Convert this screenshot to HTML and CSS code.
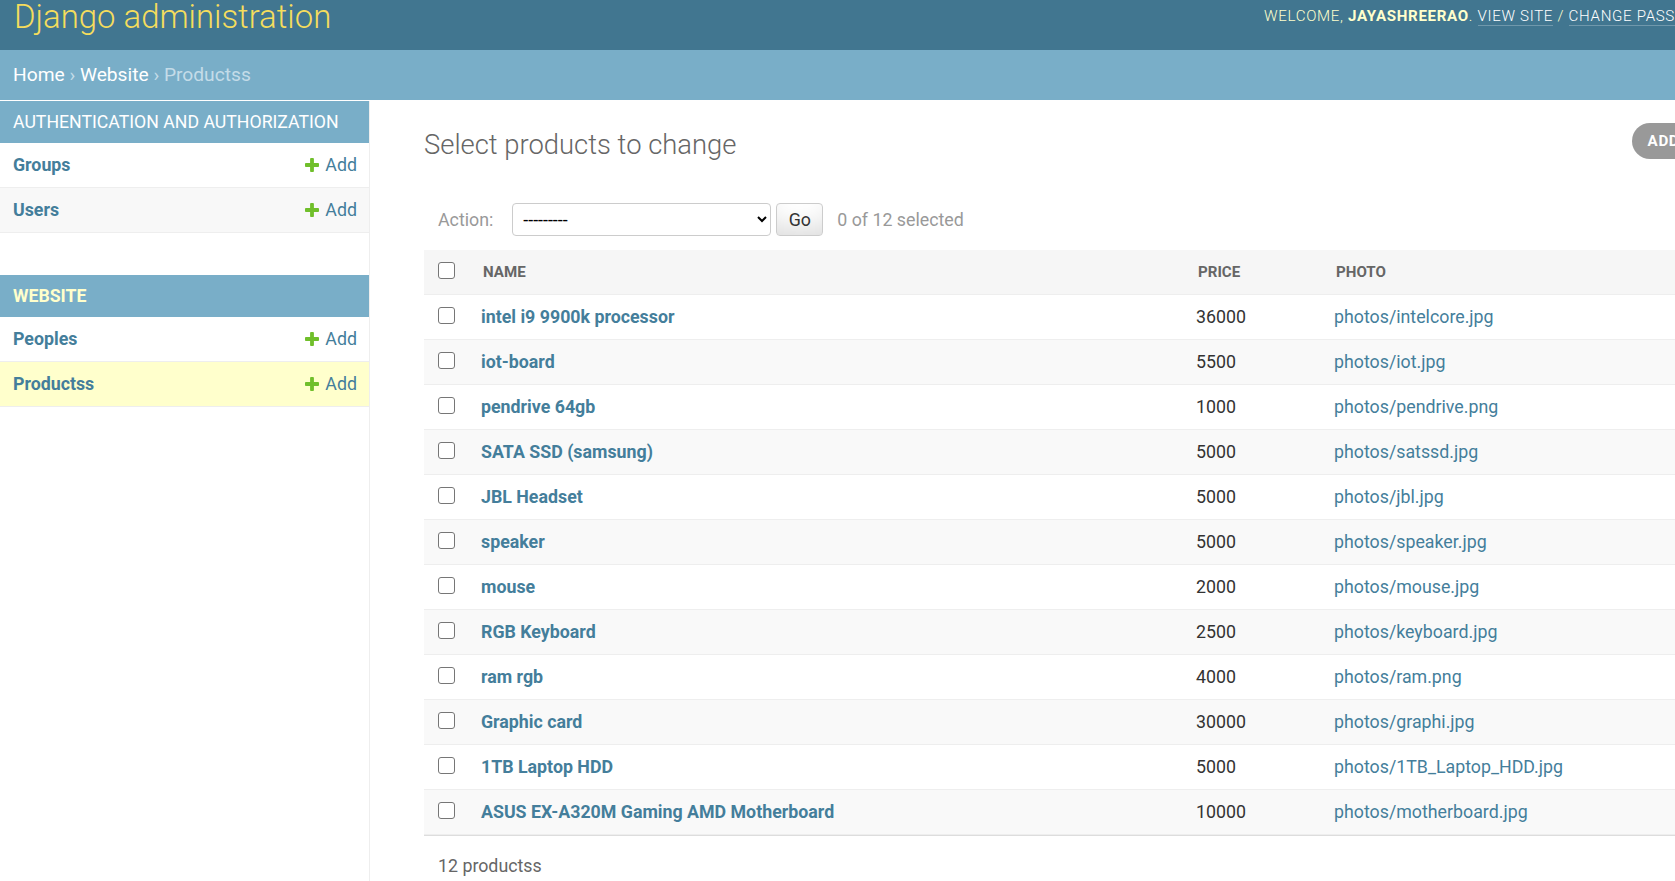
FILE: index.html
```html
<!DOCTYPE html>
<html lang="en">
<head>
<meta charset="utf-8">
<title>Select products to change | Django site admin</title>
<link rel="stylesheet" href="styles.css">
</head>
<body>
<div class="page">
  <header class="header">
    <h1 class="branding">Django administration</h1>
    <div class="user-tools">Welcome, <strong>jayashreerao</strong>. <a href="#">View site</a> / <a href="#">Change password</a> / <a href="#">Log out</a></div>
  </header>
  <nav class="breadcrumbs"><a href="#">Home</a> › <a href="#">Website</a> › Productss</nav>
  <div class="main">
    <aside class="sidebar">
      <div class="module">
        <div class="caption">Authentication and Authorization</div>
        <div class="model-row"><a class="model-name" href="#">Groups</a><a class="addlink" href="#"><svg class="plus" viewBox="192 188 1408 1408"><path d="M1600 796v192q0 40-28 68t-68 28h-416v416q0 40-28 68t-68 28h-192q-40 0-68-28t-28-68v-416h-416q-40 0-68-28t-28-68v-192q0-40 28-68t68-28h416v-416q0-40 28-68t68-28h192q40 0 68 28t28 68v416h416q40 0 68 28t28 68z"/></svg>Add</a></div>
        <div class="model-row alt"><a class="model-name" href="#">Users</a><a class="addlink" href="#"><svg class="plus" viewBox="192 188 1408 1408"><path d="M1600 796v192q0 40-28 68t-68 28h-416v416q0 40-28 68t-68 28h-192q-40 0-68-28t-28-68v-416h-416q-40 0-68-28t-28-68v-192q0-40 28-68t68-28h416v-416q0-40 28-68t68-28h192q40 0 68 28t28 68v416h416q40 0 68 28t28 68z"/></svg>Add</a></div>
      </div>
      <div class="module current-app">
        <div class="caption">Website</div>
        <div class="model-row"><a class="model-name" href="#">Peoples</a><a class="addlink" href="#"><svg class="plus" viewBox="192 188 1408 1408"><path d="M1600 796v192q0 40-28 68t-68 28h-416v416q0 40-28 68t-68 28h-192q-40 0-68-28t-28-68v-416h-416q-40 0-68-28t-28-68v-192q0-40 28-68t68-28h416v-416q0-40 28-68t68-28h192q40 0 68 28t28 68v416h416q40 0 68 28t28 68z"/></svg>Add</a></div>
        <div class="model-row current"><a class="model-name" href="#">Productss</a><a class="addlink" href="#"><svg class="plus" viewBox="192 188 1408 1408"><path d="M1600 796v192q0 40-28 68t-68 28h-416v416q0 40-28 68t-68 28h-192q-40 0-68-28t-28-68v-416h-416q-40 0-68-28t-28-68v-192q0-40 28-68t68-28h416v-416q0-40 28-68t68-28h192q40 0 68 28t28 68v416h416q40 0 68 28t28 68z"/></svg>Add</a></div>
      </div>
    </aside>
    <section class="content">
      <div class="title-row">
        <h1 class="title">Select products to change</h1>
        <a class="object-tool" href="#">Add products <svg class="tool-plus" viewBox="192 188 1408 1408"><path d="M1600 796v192q0 40-28 68t-68 28h-416v416q0 40-28 68t-68 28h-192q-40 0-68-28t-28-68v-416h-416q-40 0-68-28t-28-68v-192q0-40 28-68t68-28h416v-416q0-40 28-68t68-28h192q40 0 68 28t28 68v416h416q40 0 68 28t28 68z"/></svg></a>
      </div>
      <div class="actions">
        <label class="action-label">Action:</label>
        <select class="action-select"><option>---------</option><option>Delete selected productss</option></select>
        <button class="go" type="button">Go</button>
        <span class="counter">0 of 12 selected</span>
      </div>
      <table class="results">
        <colgroup><col class="c-cb"><col class="c-name"><col class="c-price"><col></colgroup>
        <thead>
          <tr><th class="cb-cell"><input class="cb" type="checkbox"></th><th><span class="text">Name</span></th><th><span class="text">Price</span></th><th><span class="text">Photo</span></th></tr>
        </thead>
        <tbody>
          <tr><td class="cb-cell"><input class="cb" type="checkbox"></td><th class="name"><a href="#">intel i9 9900k processor</a></th><td>36000</td><td><a href="#">photos/intelcore.jpg</a></td></tr>
          <tr><td class="cb-cell"><input class="cb" type="checkbox"></td><th class="name"><a href="#">iot-board</a></th><td>5500</td><td><a href="#">photos/iot.jpg</a></td></tr>
          <tr><td class="cb-cell"><input class="cb" type="checkbox"></td><th class="name"><a href="#">pendrive 64gb</a></th><td>1000</td><td><a href="#">photos/pendrive.png</a></td></tr>
          <tr><td class="cb-cell"><input class="cb" type="checkbox"></td><th class="name"><a href="#">SATA SSD (samsung)</a></th><td>5000</td><td><a href="#">photos/satssd.jpg</a></td></tr>
          <tr><td class="cb-cell"><input class="cb" type="checkbox"></td><th class="name"><a href="#">JBL Headset</a></th><td>5000</td><td><a href="#">photos/jbl.jpg</a></td></tr>
          <tr><td class="cb-cell"><input class="cb" type="checkbox"></td><th class="name"><a href="#">speaker</a></th><td>5000</td><td><a href="#">photos/speaker.jpg</a></td></tr>
          <tr><td class="cb-cell"><input class="cb" type="checkbox"></td><th class="name"><a href="#">mouse</a></th><td>2000</td><td><a href="#">photos/mouse.jpg</a></td></tr>
          <tr><td class="cb-cell"><input class="cb" type="checkbox"></td><th class="name"><a href="#">RGB Keyboard</a></th><td>2500</td><td><a href="#">photos/keyboard.jpg</a></td></tr>
          <tr><td class="cb-cell"><input class="cb" type="checkbox"></td><th class="name"><a href="#">ram rgb</a></th><td>4000</td><td><a href="#">photos/ram.png</a></td></tr>
          <tr><td class="cb-cell"><input class="cb" type="checkbox"></td><th class="name"><a href="#">Graphic card</a></th><td>30000</td><td><a href="#">photos/graphi.jpg</a></td></tr>
          <tr><td class="cb-cell"><input class="cb" type="checkbox"></td><th class="name"><a href="#">1TB Laptop HDD</a></th><td>5000</td><td><a href="#">photos/1TB_Laptop_HDD.jpg</a></td></tr>
          <tr><td class="cb-cell"><input class="cb" type="checkbox"></td><th class="name"><a href="#">ASUS EX-A320M Gaming AMD Motherboard</a></th><td>10000</td><td><a href="#">photos/motherboard.jpg</a></td></tr>
        </tbody>
      </table>
      <p class="paginator">12 productss</p>
    </section>
  </div>
</div>
</body>
</html>
```
FILE: styles.css
```css
html, body {
  margin: 0;
  padding: 0;
  overflow: hidden;
}
body {
  font-family: Roboto, "Liberation Sans", Arial, sans-serif;
  font-size: 17.8px;
  color: #333;
  background: #fff;
}
a {
  color: #447e9b;
  text-decoration: none;
}
.page {
  width: 1856px;
  min-height: 881px;
  display: flex;
  flex-direction: column;
}

/* header */
.header {
  display: flex;
  align-items: flex-start;
  height: 50px;
  box-sizing: border-box;
  padding: 0 54px 0 14px;
  background: #417690;
  color: #ffc;
}
.branding {
  margin: 0;
  font-size: 32.9px;
  line-height: 34px;
  font-weight: 300;
  color: #f5dd5d;
}
.user-tools {
  margin-left: auto;
  padding-top: 7px;
  font-size: 15.1px;
  line-height: 18px;
  letter-spacing: 0.68px;
  font-weight: 300;
  text-transform: uppercase;
  white-space: nowrap;
}
.user-tools strong {
  font-weight: 700;
}
.user-tools a {
  color: #fff;
  border-bottom: 1px solid rgba(255, 255, 255, 0.25);
}

/* breadcrumbs */
.breadcrumbs {
  background: #79aec8;
  color: #c4dce8;
  padding: 13px 13px 14px 13px;
  font-size: 19.2px;
  line-height: 23px;
}
.breadcrumbs a {
  color: #fff;
}

/* main */
.main {
  flex: 1;
  display: flex;
  padding-top: 1px;
}
.sidebar {
  width: 369px;
  flex: none;
  border-right: 1px solid #eee;
}
.module {
  margin-bottom: 42px;
}
.caption {
  background: #79aec8;
  color: #fff;
  font-size: 17.7px;
  line-height: 21px;
  padding: 11px 13px 10px;
  text-transform: uppercase;
}
.current-app .caption {
  color: #ffc;
  font-weight: 700;
}
.model-row {
  display: flex;
  align-items: center;
  padding: 11px 12px 11px 13px;
  line-height: 22px;
  border-bottom: 1px solid #eee;
  font-size: 17.8px;
}
.model-row.alt {
  background: #f8f8f8;
}
.model-row.current {
  background: #ffc;
}
.model-name {
  flex: 1;
  font-weight: 700;
}
.addlink {
  display: inline-flex;
  align-items: center;
  gap: 6px;
}
.plus {
  width: 14px;
  height: 14px;
  fill: #70bf2b;
}

/* content */
.content {
  flex: 1;
  min-width: 0;
  padding: 0 54px 0 54px;
}
.title-row {
  display: flex;
  justify-content: space-between;
  align-items: flex-start;
  padding-top: 22px;
}
.title {
  margin: 5px 0 0;
  font-size: 27.4px;
  line-height: 34px;
  font-weight: 300;
  color: #666;
}
.object-tool {
  display: inline-flex;
  align-items: center;
  gap: 9px;
  height: 36px;
  box-sizing: border-box;
  padding: 0 13px 0 16px;
  border-radius: 18px;
  background: #999;
  color: #fff;
  font-size: 15.1px;
  font-weight: 700;
  letter-spacing: 0.68px;
  text-transform: uppercase;
}
.tool-plus {
  width: 13px;
  height: 13px;
  fill: #fff;
}

.actions {
  display: flex;
  align-items: center;
  margin-top: 31px;
  padding: 10px 14px 14px;
  color: #999;
  font-size: 17.8px;
}
.action-label {
  margin-right: 19px;
}
.action-select {
  width: 259px;
  height: 33px;
  box-sizing: border-box;
  padding: 0 6px;
  border: 1px solid #ccc;
  border-radius: 4px;
  background: #fff;
  color: #000;
  font-family: Roboto, "Liberation Sans", Arial, sans-serif;
  font-size: 17.8px;
}
.go {
  width: 47px;
  height: 33px;
  margin-left: 5px;
  box-sizing: border-box;
  border: 1px solid #ccc;
  border-radius: 4px;
  background: #fff;
  box-shadow: 0 -21px 28px -14px rgba(0, 0, 0, 0.15) inset;
  color: #333;
  font-family: Roboto, "Liberation Sans", Arial, sans-serif;
  font-size: 17.8px;
  padding: 0;
}
.counter {
  margin-left: 14px;
}

.results {
  width: 100%;
  border-collapse: collapse;
  table-layout: fixed;
}
.c-cb { width: 46px; }
.c-name { width: 715px; }
.c-price { width: 138px; }
.results thead th {
  background: #f6f6f6;
  padding: 0;
  text-align: left;
  font-size: 15.1px;
  font-weight: 700;
  color: #666;
  text-transform: uppercase;
  border-bottom: 1px solid #eee;
  vertical-align: top;
}
.results thead th .text {
  display: block;
  padding: 11px 13px;
  line-height: 22px;
}
.results tbody td,
.results tbody th {
  padding: 11px;
  line-height: 22px;
  font-size: 17.8px;
  text-align: left;
  border-bottom: 1px solid #eee;
  vertical-align: top;
  white-space: nowrap;
}
.results tbody th.name {
  font-weight: 700;
}
.results tbody tr:nth-child(even) {
  background: #f9f9f9;
}
.results .cb-cell {
  padding: 12px 0 0 14px;
}
.cb {
  -webkit-appearance: none;
  appearance: none;
  display: block;
  width: 17px;
  height: 17px;
  margin: 0;
  box-sizing: border-box;
  border: 1px solid #767676;
  border-radius: 3px;
  background: #fff;
}

.paginator {
  margin: 0;
  border-top: 1px solid #ddd;
  padding: 14px;
  line-height: 31px;
  color: #666;
  font-size: 17.8px;
}
```
